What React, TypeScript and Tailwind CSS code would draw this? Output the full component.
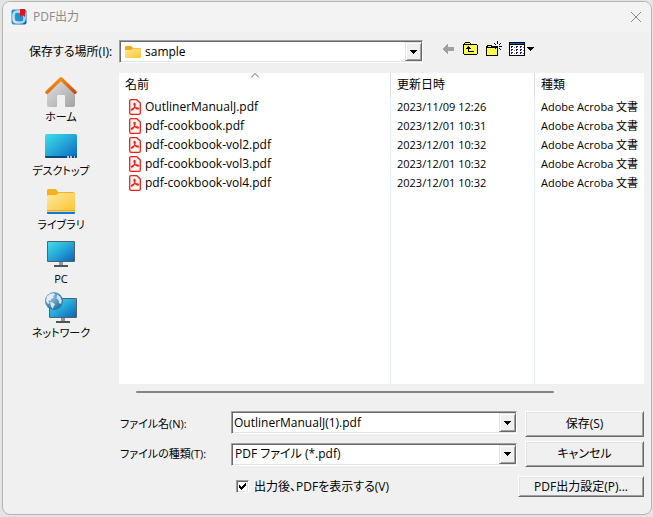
import React from 'react';
import clsx from 'clsx';

const PLACES = [
    { name: 'ホーム', icon: <HomeIcon /> },
    { name: 'デスクトップ', icon: <DesktopIcon /> },
    { name: 'ライブラリ', icon: <LibraryIcon /> },
    { name: 'PC', icon: <PcIcon /> },
    { name: 'ネットワーク', icon: <NetworkIcon /> },
];

const FILES = [
    { name: 'OutlinerManualJ.pdf', date: '2023/11/09 12:26' },
    { name: 'pdf-cookbook.pdf', date: '2023/12/01 10:31' },
    { name: 'pdf-cookbook-vol2.pdf', date: '2023/12/01 10:32' },
    { name: 'pdf-cookbook-vol3.pdf', date: '2023/12/01 10:32' },
    { name: 'pdf-cookbook-vol4.pdf', date: '2023/12/01 10:32' },
];

function AppIcon() {
    return (
        <svg width="16" height="16" viewBox="0 0 16 16">
            <defs>
                <linearGradient id="app" x1="0" y1="0" x2="1" y2="1">
                    <stop offset="0" stopColor="#2b7fb8" />
                    <stop offset="0.5" stopColor="#2f9ad0" />
                    <stop offset="1" stopColor="#0a4fa8" />
                </linearGradient>
                <linearGradient id="ring" x1="0" y1="0" x2="1" y2="1">
                    <stop offset="0" stopColor="#8fe3f2" />
                    <stop offset="0.5" stopColor="#f4dbe8" />
                    <stop offset="1" stopColor="#7fd6f5" />
                </linearGradient>
            </defs>
            <rect x="0.5" y="0.5" width="15" height="15" rx="2" fill="url(#app)" />
            <rect x="2.5" y="2.5" width="11" height="11" rx="3.5" fill="none" stroke="url(#ring)" strokeWidth="2.6" />
            <rect x="5" y="5" width="6" height="6" rx="1.5" fill="#1597cf" />
            <path d="M9 0h5v8l-2.5-2L9 8z" fill="#e8101c" />
        </svg>
    );
}

function HomeIcon() {
    return (
        <svg width="32" height="32" viewBox="0 0 32 32">
            <defs>
                <linearGradient id="wall" x1="0" y1="0" x2="1" y2="1">
                    <stop offset="0" stopColor="#e2e2e2" />
                    <stop offset="1" stopColor="#a2a2a2" />
                </linearGradient>
                <linearGradient id="roof" x1="0" y1="0" x2="1" y2="1">
                    <stop offset="0" stopColor="#f9a01b" />
                    <stop offset="1" stopColor="#d04a0c" />
                </linearGradient>
            </defs>
            <path d="M16 4 30 18v11a2 2 0 0 1-2 2h-7a1 1 0 0 1-1-1V20a1 1 0 0 0-1-1h-6a1 1 0 0 0-1 1v10a1 1 0 0 1-1 1H4a2 2 0 0 1-2-2V18z" fill="url(#wall)" />
            <path d="M2 16.2 16 2.8l14 13.4" fill="none" stroke="url(#roof)" strokeWidth="3.4" strokeLinecap="round" strokeLinejoin="round" />
        </svg>
    );
}

function DesktopIcon() {
    return (
        <svg width="32" height="32" viewBox="0 0 32 32">
            <defs>
                <linearGradient id="screen" x1="0" y1="0" x2="1" y2="1">
                    <stop offset="0" stopColor="#3fe0e8" />
                    <stop offset="0.5" stopColor="#25a6d8" />
                    <stop offset="1" stopColor="#0c63b8" />
                </linearGradient>
            </defs>
            <rect y="4" width="32" height="24" rx="1.5" fill="url(#screen)" />
            <path d="M0 26h32v.5a1.5 1.5 0 0 1-1.5 1.5h-29A1.5 1.5 0 0 1 0 26.5z" fill="#0b4a78" />
            <path d="M22 27h2M25 27h2M29 27h1" stroke="#e5f4fb" strokeWidth="1.5" />
        </svg>
    );
}

function LibraryIcon() {
    return (
        <svg width="32" height="32" viewBox="0 0 32 32">
            <defs>
                <linearGradient id="folder" x1="0" y1="0" x2="1" y2="1">
                    <stop offset="0" stopColor="#ffe8a3" />
                    <stop offset="1" stopColor="#fdc52f" />
                </linearGradient>
            </defs>
            <path d="M2 6.5A1.5 1.5 0 0 1 3.5 5h7l3 3H28a2 2 0 0 1 2 2v6H2z" fill="#f8b01a" />
            <path d="M2 12a2 2 0 0 1 1.5-1H11l3-2h15a1 1 0 0 1 1 1v17H2z" fill="url(#folder)" />
            <path d="M2 26h28v1.5H2z" fill="#e8ad22" />
            <path d="M2 28h28v1a1 1 0 0 1-1 1H3a1 1 0 0 1-1-1z" fill="#0f78d4" />
        </svg>
    );
}

function PcIcon() {
    return (
        <svg width="32" height="32" viewBox="0 0 32 32">
            <rect x="2" y="3" width="28" height="21" rx="1" fill="#51626d" />
            <rect x="3" y="4" width="26" height="19" fill="url(#screen)" />
            <path d="M14 24h4v3h-4z" fill="#8b969d" />
            <path d="M9 27h14v2H9z" fill="#4b545a" />
        </svg>
    );
}

function NetworkIcon() {
    return (
        <svg width="32" height="32" viewBox="0 0 32 32">
            <defs>
                <radialGradient id="globe" cx="0.35" cy="0.3" r="0.75">
                    <stop offset="0" stopColor="#8fc3df" />
                    <stop offset="1" stopColor="#226d9e" />
                </radialGradient>
            </defs>
            <rect x="4" y="6" width="28" height="20" rx="1" fill="#51626d" />
            <rect x="5" y="7" width="26" height="18" fill="url(#screen)" />
            <path d="M16 26h4v3h-4z" fill="#8b969d" />
            <path d="M11 29h14v2H11z" fill="#4b545a" />
            <circle cx="9" cy="9" r="9" fill="url(#globe)" />
            <path d="M2 4.5 5 2l4-.8 1 1.6-2 1.2 1 1.5-3 1.5-.5 2L3 8.5 4.5 11 3 12 1 9z" fill="#e3eff5" />
            <path d="m5 10 3 .5 2 2-1.5 2L8 17l-2-2.5z" fill="#d5e7f1" />
            <path d="m12 2.5 3 2 1.8 4-.8 3.5-2-1-.5-3-2-1.5z" fill="#cfe3ee" />
        </svg>
    );
}

function SmallFolderIcon() {
    return (
        <svg width="16" height="16" viewBox="0 0 16 16" className="shrink-0">
            <path d="M0 3a1 1 0 0 1 1-1h5l2 2h7a1 1 0 0 1 1 1v3H0z" fill="#efab16" />
            <path d="M0 6h6l2-1.5h7.5a.5.5 0 0 1 .5.5v8a1 1 0 0 1-1 1H1a1 1 0 0 1-1-1z" fill="url(#folder)" />
        </svg>
    );
}

function PdfIcon() {
    return (
        <svg width="12" height="16" viewBox="0 0 12 16" className="shrink-0">
            <path d="M2 .7h5.8l3.5 3.4V14a1.3 1.3 0 0 1-1.3 1.3H2A1.3 1.3 0 0 1 .7 14V2A1.3 1.3 0 0 1 2 .7z" fill="#fff5f4" stroke="#ee1f14" strokeWidth="1.3" />
            <path
                d="M5.400 4.400c1.300 0 .8 2.300-.2 4.200-.8 1.700-2 3.100-2.700 2.600-.8-.8 1.400-2 3.200-2.300 1.800-.3 3.900-.3 3.800.8-.2 1.100-2.300.2-3.300-1.200-.9-1.400-1.800-4.100-.8-4.100z"
                fill="none"
                stroke="#ee1f14"
                strokeWidth="1.1"
            />
        </svg>
    );
}

function BackIcon() {
    return (
        <svg width="12" height="16" viewBox="0 0 12 16" shapeRendering="crispEdges">
            <path d="M0 8h1V7h1V6h1V5h1V4h1V3h1v3h6v4H6v3H5v-1H4v-1H3v-1H2V9H1V8z" fill="#a0a0a0" />
        </svg>
    );
}

function UpIcon() {
    return (
        <svg width="16" height="16" viewBox="0 0 16 16" shapeRendering="crispEdges">
            <path d="M1 3V2h1V1h5v1h1v1h6v1h1v9h-1v1H1v-1H0V3z" fill="#000" />
            <path d="M2 2h5v1H2zM1 4h13v9H1z" fill="#ffff4d" />
            <path d="M5 5h1v1h1v1h1v1H6v2h5v1H5V8H3V7h1V6h1z" fill="#000" />
        </svg>
    );
}

function NewFolderIcon() {
    return (
        <svg width="16" height="16" viewBox="0 0 16 16" shapeRendering="crispEdges">
            <path d="M1 5V4h5v1h6v10H0V5z" fill="#000" />
            <path d="M2 5h3v1H2zM1 7h10v7H1z" fill="#ffff4d" />
            <path d="M11 0h1v3h-1zM11 7h1v3h-1zM7 5h3v1H7zM13 5h3v1h-3zM8 2h1v1H8zM9 3h1v1H9zM14 2h1v1h-1zM13 3h1v1h-1zM13 7h1v1h-1zM14 8h1v1h-1zM9 7h1v1H9z" fill="#000" />
        </svg>
    );
}

function ViewIcon() {
    return (
        <svg width="25" height="16" viewBox="0 0 25 16" shapeRendering="crispEdges">
            <path d="M0 1h16v14H0z" fill="#000" />
            <path d="M1 2h14v1H1z" fill="#0a64c8" />
            <path d="M1 4h14v10H1z" fill="#fff" />
            <path d="M2 5h2v1H2zM2 6h1v1H2zM2 8h2v1H2zM2 9h1v1H2zM2 11h2v1H2zM2 12h1v1H2zM7 5h2v1H7zM7 6h1v1H7zM7 8h2v1H7zM7 9h1v1H7zM7 11h2v1H7zM7 12h1v1H7zM11 5h2v1h-2zM11 6h1v1h-1zM11 8h2v1h-2zM11 9h1v1h-1zM11 11h2v1h-2zM11 12h1v1h-1z" fill="#16168c" />
            <path d="M5 6h1v1H5zM5 9h1v1H5zM5 12h1v1H5zM14 6h1v1h-1zM14 9h1v1h-1zM14 12h1v1h-1z" fill="#777" />
            <path d="M18 6h7v1h-1v1h-1v1h-1v1h-1V9h-1V8h-1V7h-1z" fill="#000" />
        </svg>
    );
}

function DropArrow() {
    return (
        <span className="pointer-events-none flex w-[17px] shrink-0 items-center justify-center border border-t-[#e3e3e3] border-r-[#696969] border-b-[#696969] border-l-[#e3e3e3] bg-[#f0f0f0] shadow-[inset_1px_1px_#fff,inset_-1px_-1px_#a0a0a0]">
            <svg width="7" height="4" viewBox="0 0 7 4" shapeRendering="crispEdges">
                <path d="M0 0h7v1H6v1H5v1H4v1H3V3H2V2H1V1H0z" fill="#000" />
            </svg>
        </span>
    );
}

function Combo({ className, children }: { className?: string; children: React.ReactNode }) {
    return (
        <div
            className={clsx(
                'flex h-[23px] min-w-0 border border-t-[#a0a0a0] border-r-white border-b-white border-l-[#a0a0a0] bg-white pt-px pb-px pl-px shadow-[inset_1px_1px_#696969,inset_-1px_-1px_#e3e3e3]',
                className,
            )}
        >
            {children}
            <DropArrow />
        </div>
    );
}

function PushButton({ className, children }: { className?: string; children: React.ReactNode }) {
    return (
        <button
            type="button"
            className={clsx(
                'border border-t-white border-r-[#696969] border-b-[#696969] border-l-white bg-[#f0f0f0] text-center whitespace-nowrap shadow-[inset_1px_1px_#e3e3e3,inset_-1px_-1px_#a0a0a0]',
                className,
            )}
        >
            {children}
        </button>
    );
}

export default function App() {
    return (
        <div className="flex min-h-screen flex-col bg-[#e4e4e4] pt-px pr-px pb-0.5 pl-0.5 font-['Open_Sans','Noto_Sans_CJK_JP',sans-serif] text-xs leading-4 text-black [font-feature-settings:'palt']">
            <main className="flex flex-1 flex-col overflow-hidden rounded-lg border border-[#b4b4b4] bg-[#f0f0f0]">
                <header className="flex h-[30px] items-center gap-1.5 bg-[#f3f3f3] pr-[9px] pl-2">
                    <AppIcon />
                    <h1 className="flex-1 text-[#8a8a8a]">PDF出力</h1>
                    <button type="button" aria-label="閉じる">
                        <svg width="12" height="12" viewBox="0 0 12 12">
                            <path d="m1 1 10 10M11 1 1 11" stroke="#8a8a8a" />
                        </svg>
                    </button>
                </header>

                <div className="flex items-center pt-2 pr-[7px]">
                    <label htmlFor="place" className="w-[116px] shrink-0 pl-[26px] whitespace-nowrap">
                        保存する場所(I):
                    </label>
                    <Combo className="w-[304px]">
                        <div className="flex min-w-0 flex-1 items-center gap-1 pl-1">
                            <SmallFolderIcon />
                            <select id="place" className="min-w-0 flex-1 appearance-none outline-none">
                                <option>sample</option>
                            </select>
                        </div>
                    </Combo>
                    <div className="ml-[19px] flex shrink-0 items-center gap-[7px] self-start pt-px">
                        <button type="button" aria-label="戻る" className="mr-0.5">
                            <BackIcon />
                        </button>
                        <button type="button" aria-label="上へ">
                            <UpIcon />
                        </button>
                        <button type="button" aria-label="新しいフォルダー">
                            <NewFolderIcon />
                        </button>
                        <button type="button" aria-label="表示">
                            <ViewIcon />
                        </button>
                    </div>
                </div>

                <div className="flex flex-1 pt-2.5 pr-[7px]">
                    <nav className="flex w-[116px] shrink-0 flex-col gap-1 pt-[3px]">
                        {PLACES.map((place) => (
                            <button key={place.name} type="button" className="flex flex-col items-center text-[11px] leading-[18px]">
                                {place.icon}
                                {place.name}
                            </button>
                        ))}
                    </nav>
                    <div className="flex min-w-0 flex-1 flex-col bg-white">
                        <table className="w-full flex-1 table-fixed border-separate border-spacing-0 text-left whitespace-nowrap">
                            <colgroup>
                                <col className="w-[272px]" />
                                <col className="w-36" />
                                <col />
                            </colgroup>
                            <thead>
                                <tr className="h-6">
                                    <th className="relative border-r border-[#dedede] p-0 pl-1.5 font-normal">
                                        名前
                                        <svg width="9" height="5" viewBox="0 0 9 5" className="absolute top-0 left-1/2 -translate-x-1/2">
                                            <path d="m.5 4.5 4-4 4 4" fill="none" stroke="#606060" />
                                        </svg>
                                    </th>
                                    <th className="border-r border-[#dedede] p-0 pl-1.5 font-normal">更新日時</th>
                                    <th className="p-0 pl-1.5 font-normal">種類</th>
                                </tr>
                            </thead>
                            <tbody>
                                {FILES.map((file) => (
                                    <tr key={file.name} className="h-[19px]">
                                        <td className="border-r border-[#e3f0fb] p-0 pl-2.5">
                                            <span className="flex items-center gap-1">
                                                <PdfIcon />
                                                {file.name}
                                            </span>
                                        </td>
                                        <td className="border-r border-[#e3f0fb] p-0 pl-1.5 text-[11px]">{file.date}</td>
                                        <td className="p-0 pl-1.5 text-[11px]">Adobe Acroba 文書</td>
                                    </tr>
                                ))}
                                <tr className="h-48">
                                    <td className="border-r border-[#e3f0fb]" />
                                    <td className="border-r border-[#e3f0fb]" />
                                    <td />
                                </tr>
                            </tbody>
                        </table>
                    </div>
                </div>

                <div className="pt-[7px] pr-[97px] pl-[133px]">
                    <div className="h-0.5 rounded-full bg-[#868686]" />
                </div>

                <form className="flex flex-col pt-[18px] pr-[7px] pb-[17px] pl-[117px]" onSubmit={(e) => e.preventDefault()}>
                    <div className="grid grid-cols-[111px_1fr_119px] items-center gap-y-1">
                        <label htmlFor="filename" className="text-[11px]">
                            ファイル名(N):
                        </label>
                        <Combo className="mr-2 self-start">
                            <input id="filename" defaultValue="OutlinerManualJ(1).pdf" className="min-w-0 flex-1 pl-px outline-none" />
                        </Combo>
                        <PushButton className="h-[26px]">保存(S)</PushButton>
                        <label htmlFor="filetype" className="text-[11px]">
                            ファイルの種類(T):
                        </label>
                        <Combo className="mr-2">
                            <select id="filetype" className="min-w-0 flex-1 appearance-none pl-0.5 outline-none">
                                <option>PDF ファイル (*.pdf)</option>
                            </select>
                        </Combo>
                        <PushButton className="h-[26px]">キャンセル</PushButton>
                    </div>
                    <div className="flex items-center justify-between pt-[9px] pl-[116px]">
                        <label className="flex items-center gap-[5px] whitespace-nowrap">
                            <input
                                type="checkbox"
                                defaultChecked
                                className="peer size-[13px] appearance-none border border-t-[#a0a0a0] border-r-white border-b-white border-l-[#a0a0a0] bg-white shadow-[inset_1px_1px_#696969,inset_-1px_-1px_#e3e3e3]"
                            />
                            <svg width="7" height="7" viewBox="0 0 7 7" className="invisible mr-[3px] -ml-[15px] peer-checked:visible" shapeRendering="crispEdges">
                                <path d="M0 2h1v1h1v1h1V3h1V2h1V1h1V0h1v3H6v1H5v1H4v1H3v1H2V6H1V5H0z" fill="#000" />
                            </svg>
                            出力後、PDFを表示する(V)
                        </label>
                        <PushButton className="h-[21px] w-[126px]">PDF出力設定(P)...</PushButton>
                    </div>
                </form>
            </main>
        </div>
    );
}
